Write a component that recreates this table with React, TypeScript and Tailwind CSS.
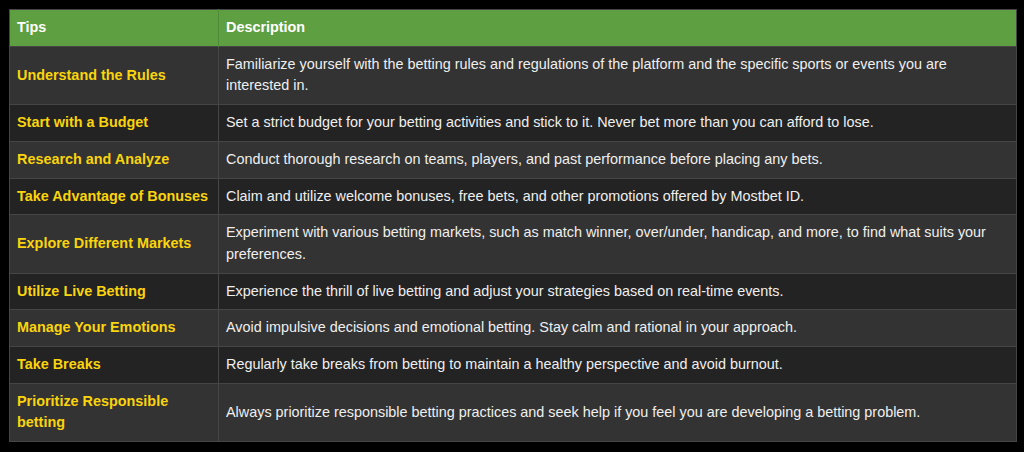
const rows: [string, string][] = [
  [
    "Understand the Rules",
    "Familiarize yourself with the betting rules and regulations of the platform and the specific sports or events you are interested in.",
  ],
  ["Start with a Budget", "Set a strict budget for your betting activities and stick to it. Never bet more than you can afford to lose."],
  ["Research and Analyze", "Conduct thorough research on teams, players, and past performance before placing any bets."],
  ["Take Advantage of Bonuses", "Claim and utilize welcome bonuses, free bets, and other promotions offered by Mostbet ID."],
  [
    "Explore Different Markets",
    "Experiment with various betting markets, such as match winner, over/under, handicap, and more, to find what suits your preferences.",
  ],
  ["Utilize Live Betting", "Experience the thrill of live betting and adjust your strategies based on real-time events."],
  ["Manage Your Emotions", "Avoid impulsive decisions and emotional betting. Stay calm and rational in your approach."],
  ["Take Breaks", "Regularly take breaks from betting to maintain a healthy perspective and avoid burnout."],
  [
    "Prioritize Responsible betting",
    "Always prioritize responsible betting practices and seek help if you feel you are developing a betting problem.",
  ],
];

export default function App() {
  return (
    <div className="h-[452px] w-[1024px] bg-black p-[9px] pr-[7px] font-['Liberation_Sans',Arial,sans-serif] text-[14.4px] leading-[21.7px]">
      <table className="w-full table-fixed border-collapse border border-[#454545]">
        <colgroup>
          <col className="w-[209px]" />
          <col />
        </colgroup>
        <thead>
          <tr className="bg-[#5e9f42] text-left font-bold text-white">
            <th className="border-r border-[#4e8a35] py-[7px] pr-2 pl-[7px]">Tips</th>
            <th className="py-[7px] pr-2 pl-[7px]">Description</th>
          </tr>
        </thead>
        <tbody>
          {rows.map(([tip, description], i) => (
            <tr key={tip} className={i % 2 === 0 ? "bg-[#333333]" : "bg-[#232323]"}>
              <td className="border-t border-r border-[#454545] py-[7px] pr-2 pl-[7px] align-middle font-bold text-[#fad40c]">{tip}</td>
              <td className="border-t border-[#454545] py-[7px] pr-2 pl-[7px] align-middle text-[#efefef]">{description}</td>
            </tr>
          ))}
        </tbody>
      </table>
    </div>
  );
}
